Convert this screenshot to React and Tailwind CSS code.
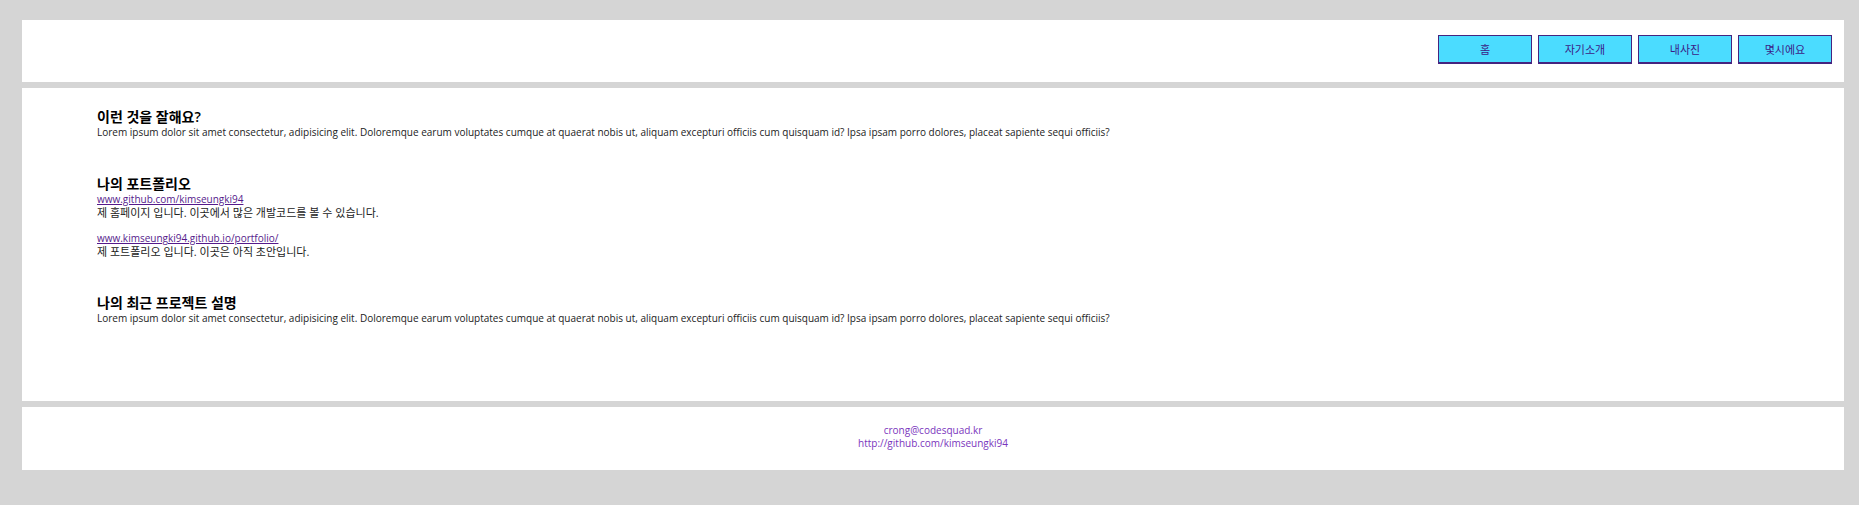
const NAV = ["홈", "자기소개", "내사진", "몇시에요"];

const LOREM =
  "Lorem ipsum dolor sit amet consectetur, adipisicing elit. Doloremque earum voluptates cumque at quaerat nobis ut, aliquam excepturi officiis cum quisquam id? Ipsa ipsam porro dolores, placeat sapiente sequi officiis?";

const LINKS = [
  { url: "www.github.com/kimseungki94", text: "제 홈페이지 입니다. 이곳에서 많은 개발코드를 볼 수 있습니다." },
  { url: "www.kimseungki94.github.io/portfolio/", text: "제 포트폴리오 입니다. 이곳은 아직 초안입니다." },
];

function Section({ title, children }) {
  return (
    <section>
      <h2 className="text-[14px] leading-[18px] font-semibold text-black">{title}</h2>
      {children}
    </section>
  );
}

export default function App() {
  return (
    <div className="flex min-h-screen flex-col gap-[6px] bg-[#d5d5d5] pt-5 pr-[15px] pb-[35px] pl-[22px] font-['Open_Sans','Noto_Sans_CJK_KR',sans-serif] text-[10px] leading-[13px] text-[#222]">
      <header className="flex justify-end bg-white pt-[15px] pr-3 pb-[18px]">
        <nav className="flex gap-[6px]">
          {NAV.map((label) => (
            <a
              key={label}
              href="#"
              className="flex h-[29px] w-[94px] items-center justify-center border border-b-2 border-[#45247f] bg-[#4bdcff] text-[11px] text-[#3b1a86]"
            >
              {label}
            </a>
          ))}
        </nav>
      </header>
      <main className="flex flex-col gap-9 bg-white pt-5 pr-10 pb-[76px] pl-[75px]">
        <Section title="이런 것을 잘해요?">
          <p>{LOREM}</p>
        </Section>
        <Section title="나의 포트폴리오">
          <ul className="flex flex-col gap-[13px]">
            {LINKS.map(({ url, text }) => (
              <li key={url}>
                <a href={"https://" + url} className="block w-fit text-[#551a8b] underline">
                  {url}
                </a>
                <p className="text-[11px]">{text}</p>
              </li>
            ))}
          </ul>
        </Section>
        <Section title="나의 최근 프로젝트 설명">
          <p>{LOREM}</p>
        </Section>
      </main>
      <footer className="bg-white pt-[17px] pb-5 text-center text-[#7a35bd]">
        <p>crong@codesquad.kr</p>
        <p>http://github.com/kimseungki94</p>
      </footer>
    </div>
  );
}
